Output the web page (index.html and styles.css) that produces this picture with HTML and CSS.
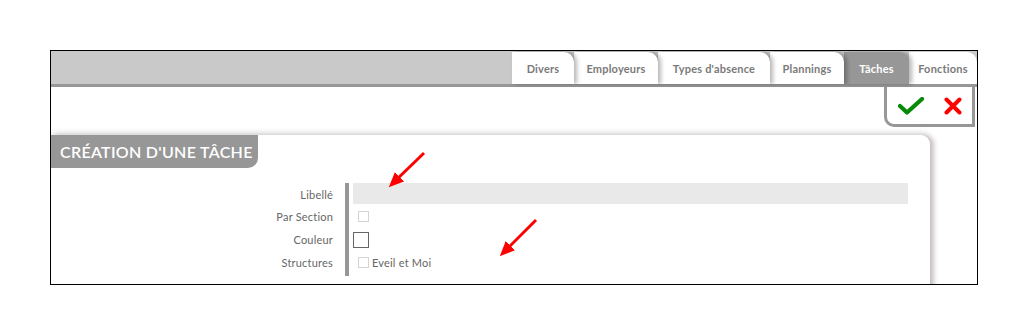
FILE: index.html
```html
<!DOCTYPE html>
<html lang="fr">
<head>
    <meta charset="UTF-8">
    <title>Création d'une tâche</title>
    <link rel="stylesheet" href="styles.css">
</head>
<body>

<div class="frame">
    <nav class="tabbar">
        <a class="tab tab-divers">Divers</a>
        <a class="tab tab-employeurs">Employeurs</a>
        <a class="tab tab-absences">Types d'absence</a>
        <a class="tab tab-plannings">Plannings</a>
        <a class="tab tab-taches active">Tâches</a>
        <a class="tab tab-fonctions">Fonctions</a>
    </nav>

    <div class="toolbar">
        <div class="actions">
            <svg class="icon" width="26" height="18" viewBox="0 0 26 18">
                <path d="M2 9 L9 15.5 L24 2" fill="none" stroke="#078a07" stroke-width="4.2" stroke-linecap="round" stroke-linejoin="round"/>
            </svg>
            <svg class="icon" width="18" height="18" viewBox="0 0 18 18">
                <path d="M2.5 2.5 L15.5 15.5 M15.5 2.5 L2.5 15.5" fill="none" stroke="#f00" stroke-width="4" stroke-linecap="round"/>
            </svg>
        </div>
    </div>

    <section class="panel">
        <h2 class="panel-title">Création d'une tâche</h2>

        <div class="form">
            <div class="labels">
                <div class="row">Libellé</div>
                <div class="row">Par Section</div>
                <div class="row">Couleur</div>
                <div class="row">Structures</div>
            </div>
            <div class="fields">
                <div class="row"><span class="text-input"></span></div>
                <div class="row"><span class="check"></span></div>
                <div class="row"><span class="color-box"></span></div>
                <div class="row"><span class="check"></span><span class="check-label">Eveil et Moi</span></div>
            </div>
        </div>
    </section>

    <!-- annotation arrows -->
    <svg class="arrows" width="926" height="233" viewBox="0 0 926 233">
        <defs>
            <marker id="head" markerWidth="5" markerHeight="4.4" refX="3.5" refY="2.2" orient="auto">
                <path d="M0 0 L5 2.2 L0 4.4 z" fill="#f00"/>
            </marker>
        </defs>
        <line x1="373" y1="102" x2="341" y2="133" stroke="#f00" stroke-width="3" marker-end="url(#head)"/>
        <line x1="485" y1="169" x2="452" y2="202" stroke="#f00" stroke-width="3" marker-end="url(#head)"/>
    </svg>
</div>

</body>
</html>
```

FILE: styles.css
```css
body {
    margin: 0;
    padding: 50px;
    background-color: #fff;
    font-family: Lato, "Open Sans", sans-serif;
    color: #666;
}

.frame {
    position: relative;
    width: 926px;
    height: 233px;
    border: 1px solid #000;
    overflow: hidden;
}

.tabbar {
    display: flex;
    justify-content: flex-end;
    align-items: flex-end;
    height: 33px;
    background-color: #c9c9c9;
    border-bottom: 3px solid #979797;
}

.tab {
    display: flex;
    align-items: center;
    justify-content: center;
    height: 32px;
    background-color: #fff;
    border-top-right-radius: 10px;
    box-shadow: 3px 0 4px rgba(0, 0, 0, 0.28);
    font-size: 11px;
    font-weight: bold;
    letter-spacing: 0.2px;
    color: #7a7a7a;
    position: relative;
}

.tab-divers     { width: 62px; z-index: 6; }
.tab-employeurs { width: 84px; z-index: 5; }
.tab-absences   { width: 112px; z-index: 4; }
.tab-plannings  { width: 74px; z-index: 3; }
.tab-taches     { width: 65px; z-index: 2; }
.tab-fonctions  { width: 68px; z-index: 1; box-shadow: none; }

.tab.active {
    background-color: #979797;
    color: #fff;
}

.toolbar {
    display: flex;
    justify-content: flex-end;
    height: 46px;
    padding-right: 2px;
}

.actions {
    display: flex;
    align-items: center;
    gap: 20px;
    height: 37px;
    padding: 0 10px 0 11px;
    border: 3px solid #979797;
    border-top: none;
    border-bottom-left-radius: 10px;
    background-color: #fff;
}

.icon {
    display: block;
}

.panel {
    margin: 2px 47px 0 0;
    height: 200px;
    background-color: #fff;
    border-top-right-radius: 9px;
    box-shadow: 4px 0 5px rgba(110, 90, 90, 0.35), 0 -3px 6px rgba(0, 0, 0, 0.08);
}

.panel-title {
    display: inline-block;
    margin: 0;
    height: 33px;
    line-height: 34px;
    padding: 0 9px;
    width: 189px;
    background-color: #979797;
    border-bottom-right-radius: 10px;
    color: #fff;
    font-size: 16px;
    font-weight: 600;
    text-transform: uppercase;
    letter-spacing: 0.3px;
    white-space: nowrap;
}

.form {
    display: flex;
    margin-top: 15px;
}

.labels {
    width: 282px;
    text-align: right;
}

.row {
    display: flex;
    align-items: center;
    height: 23px;
    font-size: 11px;
    letter-spacing: 0.2px;
}

.labels .row {
    justify-content: flex-end;
}

.labels .row:first-child {
    height: 22px;
}

.fields {
    flex: 1;
    margin-left: 12px;
    padding-left: 4px;
    border-left: 4px solid #979797;
    height: 93px;
}

.fields .row:first-child {
    align-items: flex-start;
    height: 22px;
}

.text-input {
    display: block;
    width: 555px;
    height: 21px;
    background-color: #e9e9e9;
}

.check {
    display: inline-block;
    width: 9px;
    height: 9px;
    margin-left: 5px;
    border: 1px solid #d4d4d4;
}

.color-box {
    display: inline-block;
    width: 14px;
    height: 14px;
    border: 1px solid #666;
}

.check-label {
    margin-left: 3px;
    color: #666;
}

.arrows {
    position: absolute;
    left: 0;
    top: 0;
    pointer-events: none;
}
```
